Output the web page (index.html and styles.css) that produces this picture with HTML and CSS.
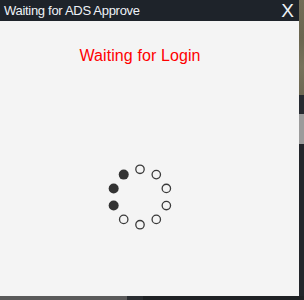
FILE: index.html
```html
<!DOCTYPE html>
<html>
<head>
<meta charset="utf-8">
<link rel="stylesheet" href="styles.css">
</head>
<body>
<div class="screen">
  <div class="top">
    <div class="window">
      <div class="titlebar">
        <span class="title">Waiting for ADS Approve</span>
        <span class="close">X</span>
      </div>
      <div class="content">
        <div class="message">Waiting for Login</div>
        <svg class="spinner" width="68" height="68" viewBox="-34 -34 68 68">
          <g fill="none" stroke="#3a3a3a" stroke-width="1.3">
            <circle cx="0" cy="-27.7" r="4.2"/>
            <circle cx="16.28" cy="-22.41" r="4.2"/>
            <circle cx="26.34" cy="-8.56" r="4.2"/>
            <circle cx="26.34" cy="8.56" r="4.2"/>
            <circle cx="16.28" cy="22.41" r="4.2"/>
            <circle cx="0" cy="27.7" r="4.2"/>
            <circle cx="-16.28" cy="22.41" r="4.2"/>
          </g>
          <g fill="#333">
            <circle cx="-26.34" cy="8.56" r="5"/>
            <circle cx="-26.34" cy="-8.56" r="5"/>
            <circle cx="-16.28" cy="-22.41" r="5"/>
          </g>
        </svg>
      </div>
    </div>
    <div class="side">
      <div class="seg-texture"></div>
      <div class="seg-dark1"></div>
      <div class="seg-gray"></div>
      <div class="seg-dark2"></div>
    </div>
  </div>
  <div class="bottom">
    <div class="b-gray"></div>
    <div class="b-mid"></div>
    <div class="b-rest"></div>
  </div>
</div>
</body>
</html>
```
FILE: styles.css
```css
html, body {
  margin: 0;
  padding: 0;
  background: #1f2124;
}
.screen {
  width: 304px;
  height: 300px;
  display: flex;
  flex-direction: column;
  overflow: hidden;
}
.top {
  display: flex;
  height: 296px;
}
.window {
  width: 299px;
  display: flex;
  flex-direction: column;
  background: #f4f4f4;
}
.titlebar {
  height: 21px;
  background: #1e232a;
  display: flex;
  align-items: center;
  justify-content: space-between;
  color: #eef2f7;
  font-family: "Liberation Sans", Arial, sans-serif;
}
.title {
  font-size: 13px;
  letter-spacing: -0.3px;
  padding-left: 4px;
  line-height: 21px;
}
.close {
  font-size: 19px;
  line-height: 21px;
  padding-right: 5px;
}
.content {
  flex: 1;
  width: 280px;
  display: flex;
  flex-direction: column;
  align-items: center;
  padding-top: 25px;
}
.message {
  color: #ff0000;
  font-family: "Liberation Sans", Arial, sans-serif;
  font-size: 16px;
  letter-spacing: 0.1px;
  line-height: 20px;
}
.spinner {
  margin-top: 97px;
  display: block;
}
.side {
  width: 5px;
  display: flex;
  flex-direction: column;
}
.seg-texture {
  height: 95px;
  background: linear-gradient(180deg, #726c56 0%, #6a654f 40%, #77715b 70%, #6c6752 100%);
}
.seg-dark1 {
  height: 19px;
  background: #262a30;
}
.seg-gray {
  height: 30px;
  background: #9b9b9b;
}
.seg-dark2 {
  flex: 1;
  background: #22252a;
}
.bottom {
  height: 4px;
  display: flex;
}
.b-gray {
  width: 127px;
  background: #5a5a5a;
}
.b-mid {
  width: 16px;
  background: #2a2d31;
}
.b-rest {
  flex: 1;
  background: #1f2124;
}
```
